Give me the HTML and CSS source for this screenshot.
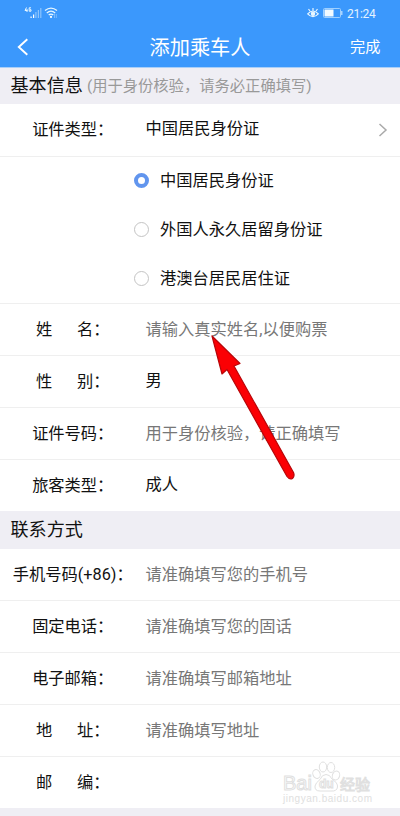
FILE: index.html
```html
<!DOCTYPE html>
<html lang="zh-CN">
	<head>
		<meta charset="utf-8">
		<title>添加乘车人</title>
		<meta name="viewport" content="width=device-width, initial-scale=1" />
		<link rel="stylesheet" href="styles.css">
	</head>
	<body>
		<header>
			<div class="status">
				<svg class="signal" width="36" height="16" viewBox="0 0 36 16">
					<g fill="none" stroke="#e6f6ff" stroke-width="1">
						<path d="M2.5 1.5L1 4.5h2.5M3 3v3M7 1.8H5.2v3.4H7V3.7H6"/>
					</g>
					<path d="M6.5 10.5h1.2V12H6.5zM9 8.5h1.2V12H9z" fill="#fff"/>
					<path d="M11.3 6h1.2v6h-1.2zM13.8 4h1.2v8h-1.2zM16.2 2h1.2v10h-1.2z" fill="#8cc4fd"/>
					<g fill="none" stroke="#e6f6ff" stroke-width="1.3">
						<path d="M21 4.6q6-5 12 0M22.8 6.9q4.2-3.6 8.4 0M24.7 9.1q2.3-2 4.6 0"/>
					</g>
					<circle cx="27" cy="10.9" r="1.1" fill="#fff"/>
					<path d="M30.5 8v4M32.3 8v4" stroke="#79b9fc" stroke-width="1"/>
				</svg>
				<div class="status-right">
					<svg width="12" height="12" viewBox="0 0 12 12" fill="none" stroke="#e9f7ff" stroke-width="1.2">
						<path d="M.7 6.8Q6 1.2 11.3 6.8Q6 12.4.7 6.8zM6 3.5V1M3 4L1.5 2M9 4l1.5-2"/>
						<circle cx="6" cy="6.8" r="1.6" fill="#e9f7ff"/>
					</svg>
					<svg width="20" height="10" viewBox="0 0 20 10">
						<rect x=".5" y=".5" width="17" height="9" rx="1" fill="none" stroke="#9fd0ff"/>
						<rect x="1.5" y="1.5" width="9" height="7" fill="#f2faff"/>
						<path d="M18.8 3v4" stroke="#c5e3ff" stroke-width="1.2"/>
					</svg>
					<span class="clock">21:24</span>
				</div>
			</div>
			<div class="bar">
				<svg class="back" width="12" height="18" viewBox="0 0 12 18" fill="none" stroke="#fff" stroke-width="1.9">
					<path d="M10.3 1.3L1.8 9L10.3 16.7"/>
				</svg>
				<h1>添加乘车人</h1>
				<span class="done">完成</span>
			</div>
		</header>
		<main>
			<h2>基本信息 <small>(用于身份核验，请务必正确填写)</small></h2>
			<div class="row first">
				<div class="label">证件类型：</div>
				<div class="value">中国居民身份证</div>
				<svg class="more" width="10" height="14" viewBox="0 0 10 14" fill="none" stroke="#aaa" stroke-width="1.5">
					<path d="M1.5 1L8 7L1.5 13"/>
				</svg>
			</div>
			<div class="options">
				<div class="option"><i class="radio checked"></i><span>中国居民身份证</span></div>
				<div class="option"><i class="radio"></i><span>外国人永久居留身份证</span></div>
				<div class="option"><i class="radio"></i><span>港澳台居民居住证</span></div>
			</div>
			<div class="row">
				<div class="label">姓&emsp;&ensp;名：</div>
				<div class="hint">请输入真实姓名,以便购票</div>
			</div>
			<div class="row">
				<div class="label">性&emsp;&ensp;别：</div>
				<div class="value">男</div>
			</div>
			<div class="row">
				<div class="label">证件号码：</div>
				<div class="hint">用于身份核验，请正确填写</div>
			</div>
			<div class="row last">
				<div class="label">旅客类型：</div>
				<div class="value">成人</div>
			</div>
			<h2 class="contact">联系方式</h2>
			<div class="row">
				<div class="label">手机号码(+86)：</div>
				<div class="hint">请准确填写您的手机号</div>
			</div>
			<div class="row">
				<div class="label">固定电话：</div>
				<div class="hint">请准确填写您的固话</div>
			</div>
			<div class="row">
				<div class="label">电子邮箱：</div>
				<div class="hint">请准确填写邮箱地址</div>
			</div>
			<div class="row">
				<div class="label">地&emsp;&ensp;址：</div>
				<div class="hint">请准确填写地址</div>
			</div>
			<div class="row last">
				<div class="label">邮&emsp;&ensp;编：</div>
			</div>
		</main>
		<svg class="arrow" width="90" height="150" viewBox="0 0 90 150">
			<path d="M2 5L12 43L17 38.5L77 145.5Q79.5 149 82.500 147.5Q85 145 83.500 141.500L24 35L30 32.500z" fill="#fb0004" stroke="#b80508" stroke-width="1.2" stroke-linejoin="round"/>
		</svg>
		<svg class="watermark" width="100" height="48" viewBox="0 0 100 48">
			<g fill="#fff" stroke="#e0e0e0" stroke-width="1">
				<text class="wm-name" x="3" y="33">Bai</text>
				<ellipse cx="36.5" cy="17" rx="3.6" ry="4.6" transform="rotate(-20 36.5 17)"/>
				<ellipse cx="43" cy="10" rx="3.7" ry="5"/>
				<ellipse cx="51" cy="10.5" rx="3.7" ry="5"/>
				<ellipse cx="56" cy="18.5" rx="3.6" ry="4.6" transform="rotate(20 56 18.5)"/>
				<path d="M46 17.500Q50 17.500 52 22Q58 26 57.500 30Q57 34.500 51 34H40Q34.500 34 35 29Q35.500 26 40 22.500Q42 17.500 46 17.500z"/>
				<text class="wm-du" x="39" y="31">du</text>
				<text class="wm-cn" x="60" y="33">经验</text>
			</g>
			<text class="wm-url" x="3" y="45" textLength="89">jingyan.baidu.com</text>
		</svg>
	</body>
</html>
```
FILE: styles.css
```css
body {
	background: #efeef4;
	color: #111;
	font-family: Roboto, "Noto Sans CJK SC", sans-serif;
	font-size: 16.25px;
	height: 816px;
	margin: 0;
	overflow: hidden;
	position: relative;
	width: 400px;
}
h1, h2 { font-weight: normal; margin: 0; }
header {
	background: #3b98fc;
	border-bottom: 1px solid #a9cff8;
	box-sizing: border-box;
	color: #fff;
	height: 68px;
}
.status {
	align-items: center;
	display: flex;
	height: 26px;
	justify-content: space-between;
	padding: 0 24px;
}
.signal { margin-top: 1px; }
.status-right {
	align-items: center;
	display: flex;
	gap: 4px;
}
.clock { color: #e4f3ff; font-size: 12px; letter-spacing: -0.3px; line-height: 12px; padding-top: 1px; width: 29px; }
.bar {
	align-items: center;
	display: grid;
	grid-template-columns: 60px 1fr 60px;
	height: 41px;
}
.back { margin-left: 17px; }
h1 { font-size: 20.2px; line-height: 24px; padding-top: 3px; text-align: center; }
.done { font-size: 15.2px; line-height: 20px; padding-left: 10px; }
h2 {
	align-items: center;
	background: #efeef4;
	box-sizing: border-box;
	display: flex;
	font-size: 18.1px;
	height: 36px;
	padding: 0 0 4px 10.5px;
}
h2 small { color: #999; font-size: 15.3px; margin-left: 4px; }
.contact { height: 38px; }
.row {
	align-items: center;
	background: #fff;
	border-bottom: 1px solid #efefef;
	box-sizing: border-box;
	display: flex;
	height: 52px;
	line-height: 24px;
}
.first { height: 53px; }
.last { border-bottom: 0; height: 51px; }
.label { text-align: center; white-space: nowrap; width: 145.5px; }
.value { flex: 1; margin-top: -2px; }
.hint { color: #777; }
.more { margin-right: 12px; }
.options {
	background: #fff;
	border-bottom: 1px solid #efefef;
	box-sizing: border-box;
	height: 147px;
	padding-left: 134px;
}
.option {
	align-items: center;
	display: flex;
	gap: 11px;
	height: 49px;
}
.option span { line-height: 24px; padding-bottom: 2px; }
.radio {
	border: 1px solid #c4c4c4;
	border-radius: 50%;
	box-sizing: border-box;
	height: 15px;
	margin-bottom: 2px;
	width: 15px;
}
.checked { border: 4px solid #6195ee; }
.arrow { left: 210px; position: absolute; top: 331px; }
.watermark { left: 280px; position: absolute; top: 757px; }
.wm-name { font: 20px "Liberation Sans", sans-serif; }
.wm-du { font: bold 12px "Liberation Sans", sans-serif; }
.wm-cn { font: 15px "Noto Sans CJK SC", sans-serif; }
.wm-url { fill: #e0e0e0; font: 10px "Liberation Sans", sans-serif; }
```
